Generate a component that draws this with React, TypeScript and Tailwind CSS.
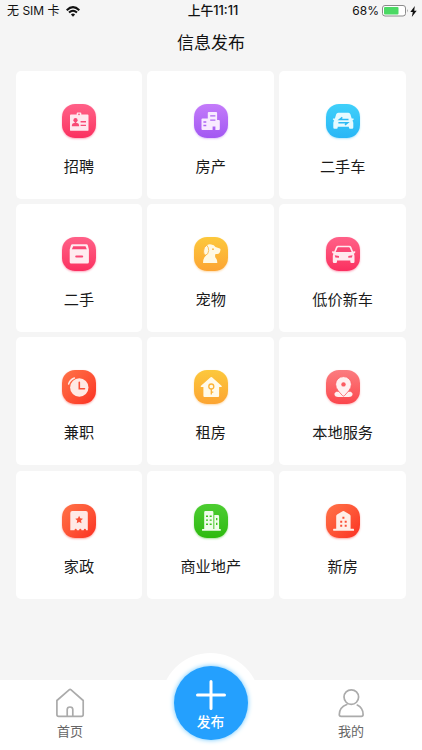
import type { ReactNode } from 'react'

interface Category {
    label: string
    tile: string
    ink: string
    hole: string
    icon: (hole: string) => ReactNode
}

const PINK = 'bg-gradient-to-b from-[#ff6088] to-[#fb2e60] shadow-[0_1px_2px_rgba(251,46,96,0.4)]'
const PURPLE = 'bg-gradient-to-b from-[#c47bfa] to-[#a257f2] shadow-[0_1px_2px_rgba(162,87,242,0.35)]'
const BLUE = 'bg-gradient-to-b from-[#3fd0fa] to-[#28b6f6] shadow-[0_1px_2px_rgba(40,182,246,0.35)]'
const YELLOW = 'bg-gradient-to-b from-[#fcc83c] to-[#fca432] shadow-[0_1px_2px_rgba(252,164,50,0.4)]'
const ORANGE = 'bg-gradient-to-br from-[#ff7248] to-[#fb2c22] shadow-[0_1px_2px_rgba(251,44,34,0.4)]'
const CORAL = 'bg-gradient-to-b from-[#fb7c80] to-[#fb454c] shadow-[0_1px_2px_rgba(251,69,76,0.35)]'
const GREEN = 'bg-gradient-to-b from-[#4ccd30] to-[#2cba0c] shadow-[0_1px_2px_rgba(44,186,12,0.4)]'

const categories: Category[] = [
    {
        label: '招聘',
        tile: PINK,
        ink: '#ffe6ee',
        hole: '#f84a76',
        icon: (hole) => (
            <>
                <path d="M14.7 10.6V9.3q0-.9.9-.9h2.800q.9 0 .9.9v1.300h6.300q.9 0 .9.9v14.400q0 .9-.9.9H8.900q-.9 0-.9-.9V11.500q0-.9.9-.9z" />
                <circle cx="17" cy="10.4" r="0.8" fill={hole} />
                <circle cx="13.5" cy="16.2" r="2.1" fill={hole} />
                <path d="M12.8 17.5h1.4v1.2q2.9.3 2.9 2.2v1.3H9.9v-1.3q0-1.9 2.9-2.2z" fill={hole} />
                <path d="M18.6 17.8H24M18.6 21.4H24" stroke={hole} strokeWidth="1.4" />
            </>
        ),
    },
    {
        label: '房产',
        tile: PURPLE,
        ink: '#f8ebff',
        hole: '#ad66f4',
        icon: (hole) => (
            <>
                <path d="M13.8 26V9q0-1 1-1h7.3q1 0 1 1v7h1.7q1 0 1 1v8q0 1-1 1h-3.4v-3.5h-2.8V26z" />
                <path d="M8.5 14.5H14V26H8.5q-1 0-1-1v-9.5q0-1 1-1z" />
                <path d="M16.2 11.9h5.2M16.2 16.2h5.2M9.4 18h2.9M9.4 21.5h2.9" stroke={hole} strokeWidth="1.3" />
            </>
        ),
    },
    {
        label: '二手车',
        tile: BLUE,
        ink: '#e6faff',
        hole: '#2cbaf4',
        icon: (hole) => (
            <>
                <path d="M12.3 8.8h10.1q1.5 0 2 1.5l1.3 4.3 1.6-.2q.9.2.3 1.1l-1.2 1.3q.9.8.9 2.2v4.6q0 1.2-1.2 1.2h-2q-1.2 0-1.2-1.2v-.8H11.700v.8q0 1.200-1.200 1.200h-2q-1.200 0-1.200-1.200V19q0-1.400.9-2.200L7 15.500q-.6-.9.300-1.100l1.600.2 1.300-4.300q.5-1.500 2.100-1.500z" />
                <path d="M22.5 15.4h-8.8l2.6-2M12.4 18.7h9.2l-2.6 2.1" fill="none" stroke={hole} strokeWidth="1.5" />
            </>
        ),
    },
    {
        label: '二手',
        tile: PINK,
        ink: '#ffebf0',
        hole: '#fa4775',
        icon: (hole) => (
            <>
                <path d="M10.6 7.2h13.7q1.3 0 1.6 1.3l1 4v12.600q0 1.500-1.500 1.500H9.200q-1.500 0-1.500-1.500V12.500l1.200-4q.3-1.300 1.700-1.300z" />
                <path d="M11.2 9.2h12.3l1.3 3H9.9z" fill={hole} />
                <rect x="13.2" y="18.4" width="8" height="2.2" rx="1" fill={hole} />
            </>
        ),
    },
    {
        label: '宠物',
        tile: YELLOW,
        ink: '#fff9e4',
        hole: '#fcb337',
        icon: (hole) => (
            <>
                <path d="M13.2 7.9q1.5-.8 4-.5 3 .3 4.300 2.700l4.300 1.300q.9.300.7 1.400-.2 1.800-1.100 3.300-.7 1-2.200 1h-1.700q-.9 2.200 0 3.600l1 1.300q.8 1.400.8 4H9q0-3.200 1.300-5.400l2.500-3z" />
                <path d="M12.7 8.2q-2.9 1.9-3.100 5.800-.2 3.900 1.900 4.100 2.900-.4 3.200-4.600 0-3.500-2-5.300z" stroke={hole} strokeWidth="0.8" />
                <circle cx="19" cy="12.2" r="0.9" fill={hole} />
            </>
        ),
    },
    {
        label: '低价新车',
        tile: PINK,
        ink: '#ffe9ef',
        hole: '#fa4775',
        icon: (hole) => (
            <>
                <path d="M12 8.7h11.300q1.400 0 2 1.400l1.800 4.300 1.700-.1q.8.200.5 1-.5 1.200-1.500 1.500.7 1 .7 2.500v5.500q0 1.200-1.200 1.200h-1.800q-1.200 0-1.200-1.200v-1.200H11v1.200q0 1.200-1.200 1.200H8q-1.200 0-1.200-1.200v-5.500q0-1.500.7-2.500-1-.3-1.500-1.500-.2-.9.600-1l1.600.1 1.800-4.300q.6-1.400 2-1.400z" />
                <path d="M12.4 10.2h10.5q.7 0 1 .7l1.700 4H9.700l1.700-4q.3-.7 1-.7z" fill={hole} />
                <path d="M8.8 18.3l4.2.8v1.600l-3.600-.2zM26.500 18.300l-4.200.8v1.600l3.600-.2z" fill={hole} />
            </>
        ),
    },
    {
        label: '兼职',
        tile: ORANGE,
        ink: '#ffe9e4',
        hole: '#fb5138',
        icon: (hole) => (
            <>
                <circle cx="17.3" cy="17.5" r="9.2" />
                <path d="M6.6 14q1.4-4.3 5.8-6" fill="none" stroke="#ffe9e4" strokeWidth="1.5" strokeLinecap="round" />
                <path d="M17.3 12.3v6.4h5.2" fill="none" stroke={hole} strokeWidth="1.6" strokeLinecap="round" />
            </>
        ),
    },
    {
        label: '租房',
        tile: YELLOW,
        ink: '#fffaea',
        hole: '#fcb337',
        icon: (hole) => (
            <>
                <path d="M18 7.3l9.5 8.5q1 1-.2 1.300h-2.200v9q0 1-1 1H10.400q-1 0-1-1v-9H7.200q-1.200-.3-.2-1.300l9.600-8.500q.7-.6 1.400 0z" />
                <circle cx="17.3" cy="16.5" r="2.5" fill="none" stroke={hole} strokeWidth="1.3" />
                <path d="M17.3 19v5.5M17.3 22.2h2" fill="none" stroke={hole} strokeWidth="1.3" />
            </>
        ),
    },
    {
        label: '本地服务',
        tile: CORAL,
        ink: '#fff0f0',
        hole: '#fb5c62',
        icon: (hole) => (
            <>
                <path d="M10.2 21.8q-2.4 1.2-1.7 3.2.8 1.900 3.500 1.900h11q2.700 0 3.500-1.900.7-2-1.700-3.200z" />
                <path
                    d="M17.5 6.6q3.4 0 5.7 2.3 2.2 2.300 2.200 5.300 0 3.300-2.600 6.600l-4.200 4.700q-1.100 1.200-2.200 0l-4.200-4.700q-2.600-3.300-2.600-6.600 0-3 2.200-5.300 2.300-2.300 5.700-2.300z"
                    stroke={hole}
                    strokeWidth="0.8"
                />
                <circle cx="17.5" cy="14.4" r="2.2" fill={hole} />
            </>
        ),
    },
    {
        label: '家政',
        tile: ORANGE,
        ink: '#ffe9e6',
        hole: '#fb5138',
        icon: (hole) => (
            <>
                <path d="M10.3 7h13.5q2 0 2 2v17.2h-1.700q-.2-1.400-1.200-1.400t-1.200 1.400h-2.200q-.2-1.400-1.200-1.400t-1.200 1.400h-2.200q-.2-1.400-1.200-1.400t-1.200 1.400H8.300V9q0-2 2-2z" />
                <path d="M17.1 11.8l1.2 2.5 2.7.4-2 1.9.5 2.7-2.4-1.3-2.4 1.3.5-2.7-2-1.9 2.7-.4z" fill={hole} />
            </>
        ),
    },
    {
        label: '商业地产',
        tile: GREEN,
        ink: '#f0fdeb',
        hole: '#3dc41e',
        icon: (hole) => (
            <>
                <path d="M10.2 25V8.2q0-1.200 1.200-1.200h6.800q1.200 0 1.200 1.200V25zM20.300 25V11h3.500q1.300 0 1.300 1.300V25z" />
                <rect x="8" y="25" width="18.8" height="1.7" rx="0.5" />
                <path d="M12 12.2h2M15.7 12.2h2M12 16.1h2M15.7 16.1h2M12 20.3h2M15.7 20.3h2" stroke={hole} strokeWidth="1.4" />
                <path d="M22.7 14v2.3M22.7 18.7V21" stroke={hole} strokeWidth="1.4" />
            </>
        ),
    },
    {
        label: '新房',
        tile: ORANGE,
        ink: '#ffefe9',
        hole: '#fb5138',
        icon: (hole) => (
            <>
                <path d="M10.2 25V12q0-1 .9-1.5l5.5-3.3q.8-.5 1.600 0l5.500 3.300q.9.500.9 1.500v13z" />
                <rect x="7.2" y="24.8" width="20.8" height="2" rx="0.5" />
                <path d="M16.4 13.7h2M14.2 17.8h2M18.7 17.8h2M14.2 21.7h2M18.7 21.7h2" stroke={hole} strokeWidth="1.9" />
            </>
        ),
    },
]

function StatusBar() {
    return (
        <header className="grid grid-cols-3 items-center h-[22px] pl-[7px] pr-[5px] text-[12px] leading-none text-[#111]">
            <div className="flex items-center gap-[6px]">
                <span>无 SIM 卡</span>
                <svg width="14" height="11" viewBox="0 0 14 11" fill="none" stroke="#111" strokeWidth="2">
                    <path d="M0.7 4.2Q7-2 13.3 4.2M3 6.6q4-3.7 8 0" />
                    <path d="M4.9 8.4q2.1-1.7 4.2 0L7 10.7z" fill="#111" stroke="none" />
                </svg>
            </div>
            <div className="text-center text-[12.8px] font-medium pt-px pl-[2px]">上午11:11</div>
            <div className="flex items-center justify-end">
                <span className="mr-[3px]">68%</span>
                <svg width="27" height="12" viewBox="0 0 27 12">
                    <rect x="0.5" y="0.5" width="23" height="10.5" rx="2.5" fill="#fff" stroke="#8b8b8b" />
                    <rect x="2" y="2" width="14.5" height="7.5" rx="1" fill="#4bd964" />
                    <path d="M25 4q1.5 1.700 0 3.500z" fill="#8b8b8b" />
                </svg>
                <svg className="ml-px" width="7" height="11" viewBox="0 0 7 11" fill="#111">
                    <path d="M4.8 0L0.3 6h2.5L1.8 11l4.9-6.3H4.2z" />
                </svg>
            </div>
        </header>
    )
}

function CategoryCard({ item }: { item: Category }) {
    return (
        <div className="flex flex-col items-center h-[128px] pt-[33px] bg-white rounded-[5px]">
            <div className={`size-[34px] rounded-[13px] ${item.tile}`}>
                <svg className="size-[34px]" viewBox="0 0 34 34" fill={item.ink}>
                    {item.icon(item.hole)}
                </svg>
            </div>
            <span className="mt-[17px] text-[15.2px] leading-6 text-[#1a1a1a]">{item.label}</span>
        </div>
    )
}

function TabBar() {
    return (
        <nav className="relative flex justify-between h-[70px] pl-[40px] pr-[41px] bg-white text-[13px] text-[#666]">
            <div className="absolute left-1/2 -top-[27px] -ml-[50px] size-[99px] rounded-full bg-white" />
            <button className="flex flex-col items-center w-[60px] pt-[8px]">
                <svg width="30" height="30" viewBox="0 0 30 30" fill="none" stroke="#ababab" strokeWidth="1.7" strokeLinejoin="round">
                    <path d="M1.9 12.5L14.1 1.8q1-.8 2 0L28.200 12.500v14q0 1.800-1.800 1.800H3.700q-1.800 0-1.800-1.800z" />
                    <path d="M12.2 28v-6.5q0-2.5 2.8-2.5t2.8 2.5V28" />
                </svg>
                <span className="mt-[3px] leading-5">首页</span>
            </button>
            <button className="absolute left-1/2 -top-[14px] -ml-[37.5px] flex flex-col items-center size-[74px] pt-[14px] rounded-full bg-[#24a0fe] text-white shadow-[0_0_5px_#68c6ff]">
                <svg width="30" height="30" viewBox="0 0 30 30" stroke="#fff" strokeWidth="3" strokeLinecap="round">
                    <path d="M15 1.5v27M1.5 15h27" />
                </svg>
                <span className="mt-[2px] text-[13.8px] leading-5 font-medium">发布</span>
            </button>
            <button className="flex flex-col items-center w-[60px] pt-[8px]">
                <svg width="30" height="30" viewBox="0 0 30 30" fill="none" stroke="#ababab" strokeWidth="1.7" strokeLinecap="round">
                    <circle cx="15.3" cy="9.1" r="7.3" />
                    <path d="M10.8 16.5Q3.3 19.3 3.3 26.5q0 1.8 1.8 1.8h20.200q1.800 0 1.800-1.800 0-6.500-5.800-9.400" />
                </svg>
                <span className="mt-[3px] leading-5">我的</span>
            </button>
        </nav>
    )
}

export default function App() {
    return (
        <div className="flex flex-col w-[422px] h-[750px] overflow-hidden bg-[#f5f5f5] font-['Inter','Noto_Sans_CJK_SC',sans-serif]">
            <StatusBar />
            <h1 className="h-[48px] pt-[7px] text-center text-[17px] leading-7 text-[#111]">信息发布</h1>
            <main className="flex-1 grid grid-cols-3 content-start gap-x-[5px] gap-y-[5.4px] pt-[0.5px] pl-[15.5px] pr-[15.9px]">
                {categories.map((item) => (
                    <CategoryCard key={item.label} item={item} />
                ))}
            </main>
            <TabBar />
        </div>
    )
}
